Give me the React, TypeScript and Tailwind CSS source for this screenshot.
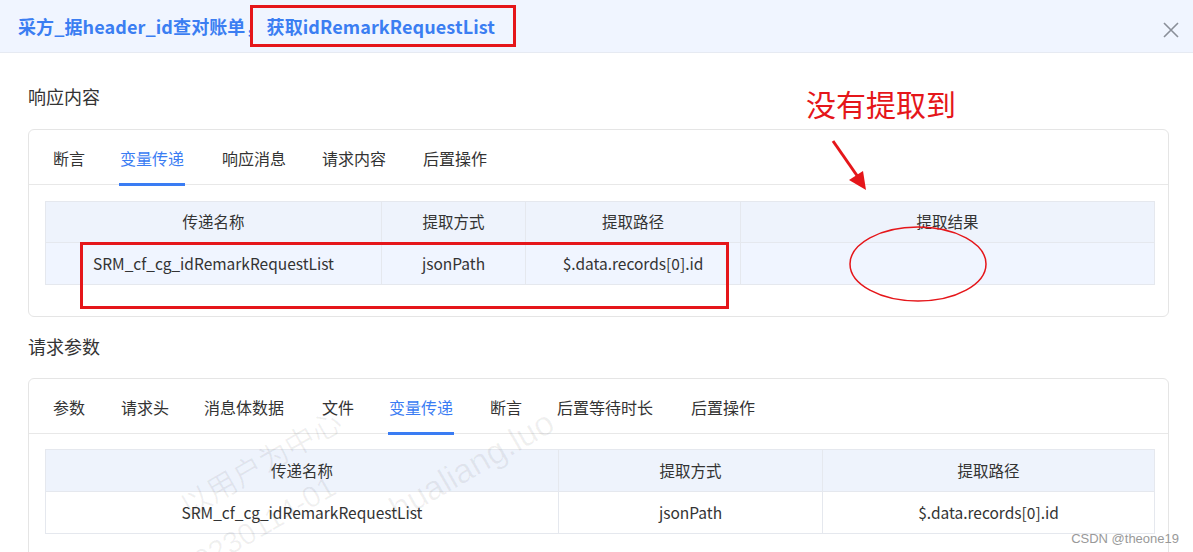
import React from "react";

const font = { fontFamily: '"Noto Sans CJK SC", "Noto Sans", sans-serif' };

function Tabs({ items, active }: { items: { label: string; x: number }[]; active: number }) {
  return (
    <div className="relative h-[55px] border-b border-[#e8e8e8]">
      {items.map((t, i) => (
        <div
          key={t.label}
          className={`absolute top-0 h-[55px] flex items-center text-[16px] ${i === active ? "text-[#3a7cf3]" : "text-[#333]"}`}
          style={{ left: t.x }}
        >
          {t.label}
          {i === active && <div className="absolute left-[-1px] right-[-1px] bottom-[-1px] h-[3px] bg-[#3a7cf3]" />}
        </div>
      ))}
    </div>
  );
}

function Cell({ w, children, last }: { w: number; children?: React.ReactNode; last?: boolean }) {
  return (
    <div
      className={`flex items-center justify-center h-full text-[15.5px] text-[#333] ${last ? "" : "border-r border-[#e5e8ee]"}`}
      style={{ width: w }}
    >
      {children}
    </div>
  );
}

export default function App() {
  return (
    <div className="relative w-[1193px] h-[552px] overflow-hidden bg-white" style={font}>
      {/* header */}
      <div className="h-[53px] bg-[#f0f5ff] border-b border-[#e6eaf2] flex items-center justify-between pl-[18px] pr-[13px]">
        <div className="text-[18px] font-bold text-[#3b7ef2] tracking-[0.1px]">
          采方_据header_id查对账单<span className="mr-[3px]">，</span>获取idRemarkRequestList
        </div>
        <svg width="18" height="18" viewBox="0 0 18 18" className="mt-[8px]">
          <path d="M2 2 L16 16 M16 2 L2 16" stroke="#8a8f99" strokeWidth="1.6" />
        </svg>
      </div>

      <div className="px-[28px] w-[1169px] box-content">
        <div className="h-[76px] pt-[31px] text-[18px] text-[#333] leading-[24px]">响应内容</div>
        <div className="w-[1141px] border border-[#e5e5e5] rounded-[6px]">
          <Tabs
            active={1}
            items={[
              { label: "断言", x: 24 },
              { label: "变量传递", x: 91 },
              { label: "响应消息", x: 193 },
              { label: "请求内容", x: 293 },
              { label: "后置操作", x: 394 },
            ]}
          />
          <div className="pt-[16px] pb-[31px] pl-[16px]">
            <div className="w-[1110px] border border-[#e5e8ee]">
              <div className="h-[41px] flex bg-[#eef3fc] border-b border-[#e5e8ee]">
                <Cell w={336}>传递名称</Cell>
                <Cell w={144}>提取方式</Cell>
                <Cell w={215}>提取路径</Cell>
                <Cell w={413} last>提取结果</Cell>
              </div>
              <div className="h-[41px] flex bg-[#f0f5ff]">
                <Cell w={336}>SRM_cf_cg_idRemarkRequestList</Cell>
                <Cell w={144}>jsonPath</Cell>
                <Cell w={215}>$.data.records[0].id</Cell>
                <Cell w={413} last></Cell>
              </div>
            </div>
          </div>
        </div>

        <div className="h-[61px] pt-[17px] text-[18px] text-[#333] leading-[24px]">请求参数</div>
        <div className="w-[1141px] h-[200px] border border-[#e5e5e5] rounded-[6px]">
          <Tabs
            active={4}
            items={[
              { label: "参数", x: 24 },
              { label: "请求头", x: 92 },
              { label: "消息体数据", x: 175 },
              { label: "文件", x: 293 },
              { label: "变量传递", x: 360 },
              { label: "断言", x: 461 },
              { label: "后置等待时长", x: 528 },
              { label: "后置操作", x: 662 },
            ]}
          />
          <div className="pt-[15px] pl-[16px]">
            <div className="w-[1110px] border border-[#e5e8ee]">
              <div className="h-[42px] flex bg-[#eef3fc] border-b border-[#e5e8ee]">
                <Cell w={513}>传递名称</Cell>
                <Cell w={264}>提取方式</Cell>
                <Cell w={331} last>提取路径</Cell>
              </div>
              <div className="h-[41px] flex bg-white">
                <Cell w={513}>SRM_cf_cg_idRemarkRequestList</Cell>
                <Cell w={264}>jsonPath</Cell>
                <Cell w={331} last>$.data.records[0].id</Cell>
              </div>
            </div>
          </div>
        </div>
      </div>

      {/* watermark */}
      <div aria-hidden className="absolute left-[170px] top-[440px] text-[30px] text-black/[0.06] -rotate-[30deg] whitespace-nowrap pointer-events-none">
        以用户为中心
      </div>
      <div aria-hidden className="absolute left-[380px] top-[440px] text-[34px] text-black/[0.06] -rotate-[30deg] whitespace-nowrap pointer-events-none" style={{ fontFamily: '"Liberation Sans", sans-serif' }}>
        hualiang.luo
      </div>
      <div aria-hidden className="absolute left-[170px] top-[505px] text-[30px] text-black/[0.06] -rotate-[30deg] whitespace-nowrap pointer-events-none" style={{ fontFamily: '"Liberation Sans", sans-serif' }}>
        20230114-01
      </div>

      {/* annotations */}
      <div className="absolute left-[250px] top-[5px] w-[266px] h-[42px] border-[3px] border-[#e5161a] pointer-events-none" />
      <div className="absolute left-[80px] top-[242px] w-[649px] h-[67px] border-[3px] border-[#e5161a] pointer-events-none" />
      <div className="absolute left-[806px] top-[82px] text-[30px] leading-[42px] text-[#e5161a]">没有提取到</div>
      <svg className="absolute left-0 top-0 pointer-events-none" width="1193" height="552">
        <ellipse cx="918" cy="264" rx="68" ry="37" fill="none" stroke="#e5161a" strokeWidth="1.5" />
        <line x1="833" y1="141" x2="858" y2="177" stroke="#e5161a" strokeWidth="3" />
        <polygon points="866,190 849,180 863,171" fill="#e5161a" />
      </svg>

      <div className="absolute right-[14px] top-[529px] text-[13px] text-[#999]" style={{ fontFamily: '"Liberation Sans", Arial, sans-serif' }}>
        CSDN @theone19
      </div>
    </div>
  );
}
